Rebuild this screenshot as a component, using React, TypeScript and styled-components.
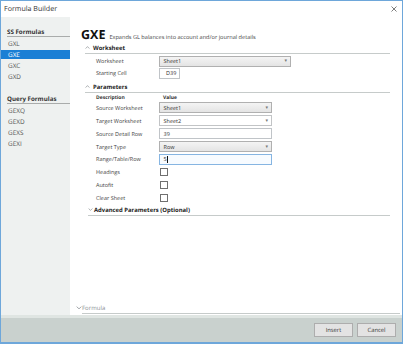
import styled, { createGlobalStyle } from "styled-components";

const GlobalStyle = createGlobalStyle`
  html, body {
    margin: 0;
    padding: 0;
    overflow: hidden;
  }
  body {
    font-family: "Open Sans", "Noto Sans", sans-serif;
    text-rendering: geometricPrecision;
    color: #333;
  }
  * {
    box-sizing: border-box;
  }
`;

const ssFormulas = ["GXL", "GXE", "GXC", "GXD"];
const queryFormulas = ["GEXQ", "GEXD", "GEXS", "GEXI"];

type Param = {
  label: string;
  kind: "select" | "input" | "check";
  value?: string;
  plain?: boolean;
  focused?: boolean;
};

const parameters: Param[] = [
  { label: "Source Worksheet", kind: "select", value: "Sheet1" },
  { label: "Target Worksheet", kind: "select", value: "Sheet2", plain: true },
  { label: "Source Detail Row", kind: "input", value: "39" },
  { label: "Target Type", kind: "select", value: "Row" },
  { label: "Range/Table/Row", kind: "input", value: "5", focused: true },
  { label: "Headings", kind: "check" },
  { label: "Autofit", kind: "check" },
  { label: "Clear Sheet", kind: "check" },
];

const Chevron = ({ up, size = 5 }: { up?: boolean; size?: number }) => (
  <svg width={size} height={size * 0.6} viewBox="0 0 5 3">
    <polyline
      points={up ? "0.6,2.6 2.5,0.6 4.4,2.6" : "0.6,0.5 2.5,2.4 4.4,0.5"}
      fill="none"
      stroke="#8b9094"
      strokeWidth="0.7"
    />
  </svg>
);

const App = () => {
  return (
    <>
      <GlobalStyle />
      <Window>
        <TitleBar>
          <Title>Formula Builder</Title>
          <svg width="6" height="6" viewBox="0 0 6 6">
            <path d="M0.5 0.5 L5.5 5.5 M5.5 0.5 L0.5 5.5" stroke="#444" strokeWidth="0.7" />
          </svg>
        </TitleBar>

        <Body>
          <Sidebar>
            <GroupTitle>SS Formulas</GroupTitle>
            {ssFormulas.map((f) => (
              <NavItem key={f} $active={f === "GXE"}>
                {f}
              </NavItem>
            ))}
            <GroupTitle $spaced>Query Formulas</GroupTitle>
            {queryFormulas.map((f) => (
              <NavItem key={f}>{f}</NavItem>
            ))}
          </Sidebar>

          <Main>
            <Content>
              <Heading>
                <Code>GXE</Code>
                <Desc>Expands GL balances into account and/or journal details</Desc>
              </Heading>

              <SectionHeader $indent={4}>
                <ChevronBox $w={8}>
                  <Chevron up />
                </ChevronBox>
                Worksheet
              </SectionHeader>
              <Row $h={12}>
                <Label>Worksheet</Label>
                <Select $w={132}>
                  Sheet1<Arrow>▾</Arrow>
                </Select>
              </Row>
              <Row $h={12}>
                <Label>Starting Cell</Label>
                <Input $w={21} $center>
                  D39
                </Input>
              </Row>

              <SectionHeader $indent={4} $gap={2}>
                <ChevronBox $w={8}>
                  <Chevron up />
                </ChevronBox>
                Parameters
              </SectionHeader>
              <SubHeader>
                <span>Description</span>
                <span>Value</span>
              </SubHeader>
              {parameters.map((p) => (
                <Row key={p.label} $h={12.86}>
                  <Label>{p.label}</Label>
                  {p.kind === "select" && (
                    <Select $w={113} $plain={p.plain}>
                      {p.value}
                      <Arrow>▾</Arrow>
                    </Select>
                  )}
                  {p.kind === "input" && (
                    <Input $w={113} $focused={p.focused}>
                      {p.value}
                      {p.focused && <Caret />}
                    </Input>
                  )}
                  {p.kind === "check" && <Check />}
                </Row>
              ))}

              <SectionHeader $indent={7}>
                <ChevronBox $w={6}>
                  <Chevron />
                </ChevronBox>
                Advanced Parameters (Optional)
              </SectionHeader>
            </Content>

            <FormulaBar>
              <ChevronBox $w={6}>
                <Chevron size={6} />
              </ChevronBox>
              <FormulaLabel>Formula</FormulaLabel>
            </FormulaBar>
          </Main>
        </Body>

        <Footer>
          <Button>Insert</Button>
          <Button>Cancel</Button>
        </Footer>
      </Window>
    </>
  );
};

const Window = styled.div`
  width: 403px;
  height: 344px;
  display: flex;
  flex-direction: column;
  background: #fff;
  border: 1px solid #6ea7da;
  border-bottom-width: 2px;
`;

const TitleBar = styled.div`
  height: 16px;
  flex: none;
  display: flex;
  align-items: center;
  justify-content: space-between;
  padding: 0 5px 0 3px;
`;

const Title = styled.span`
  font-size: 7.1px;
  color: #333;
`;

const Body = styled.div`
  flex: 1;
  min-height: 0;
  display: grid;
  grid-template-columns: 69px 1fr;
`;

const Sidebar = styled.nav`
  background: #eef1f0;
  padding-top: 10px;
  display: flex;
  flex-direction: column;
`;

const GroupTitle = styled.div<{ $spaced?: boolean }>`
  margin-left: 6px;
  margin-top: ${(p) => (p.$spaced ? "12.5px" : "0")};
  height: 10px;
  line-height: 9px;
  font-size: 6.2px;
  font-weight: 700;
  color: #333;
  border-bottom: 1px solid #a9acab;
`;

const NavItem = styled.div<{ $active?: boolean }>`
  height: 9px;
  margin-top: 2px;
  line-height: 9px;
  padding-left: 7px;
  font-size: 6.4px;
  color: ${(p) => (p.$active ? "#fff" : "#555")};
  background: ${(p) => (p.$active ? "#1a7fd5" : "transparent")};
`;

const Main = styled.main`
  display: flex;
  flex-direction: column;
  justify-content: space-between;
  min-width: 0;
`;

const Content = styled.div`
  padding: 11px 12px 0 11px;
  display: flex;
  flex-direction: column;
`;

const Heading = styled.div`
  height: 14px;
  display: flex;
  align-items: baseline;
  gap: 4px;
`;

const Code = styled.span`
  font-size: 12.5px;
  line-height: 14px;
  font-weight: 700;
  color: #111;
`;

const Desc = styled.span`
  font-size: 5.6px;
  color: #444;
`;

const SectionHeader = styled.div<{ $indent: number; $gap?: number }>`
  height: 12px;
  margin-left: ${(p) => p.$indent}px;
  margin-top: ${(p) => p.$gap ?? 0}px;
  margin-bottom: 1px;
  display: flex;
  align-items: center;
  font-size: 5.9px;
  font-weight: 700;
  color: #222;
  border-bottom: 1px solid #c6cbca;
`;

const ChevronBox = styled.span<{ $w: number }>`
  width: ${(p) => p.$w}px;
  display: flex;
  align-items: center;
`;

const SubHeader = styled.div`
  height: 7.5px;
  padding-left: 15px;
  display: grid;
  grid-template-columns: 67px auto;
  align-items: center;
  font-size: 5px;
  font-weight: 700;
  color: #333;
`;

const Row = styled.div<{ $h: number }>`
  height: ${(p) => p.$h}px;
  padding-left: 15px;
  display: grid;
  grid-template-columns: 63px auto;
  align-items: center;
`;

const Label = styled.span`
  font-size: 5.5px;
  color: #444;
`;

const Select = styled.div<{ $w: number; $plain?: boolean }>`
  width: ${(p) => p.$w}px;
  height: 11px;
  padding: 0 3px 0 3.5px;
  display: flex;
  align-items: center;
  justify-content: space-between;
  font-size: 5.5px;
  color: #333;
  border: 1px solid ${(p) => (p.$plain ? "#c2c4c6" : "#b0b0b0")};
  background: ${(p) => (p.$plain ? "#fff" : "linear-gradient(#f4f4f4, #e4e4e4)")};
`;

const Arrow = styled.span`
  font-size: 5px;
  color: #777;
`;

const Input = styled.div<{ $w: number; $center?: boolean; $focused?: boolean }>`
  width: ${(p) => p.$w}px;
  height: 11px;
  padding-left: 3.5px;
  display: flex;
  align-items: center;
  justify-content: ${(p) => (p.$center ? "center" : "flex-start")};
  font-size: 5.5px;
  color: #333;
  border: 1px solid ${(p) => (p.$focused ? "#86b5e2" : "#c0c4c8")};
  background: ${(p) => (p.$focused ? "#f7fbff" : "#fff")};
`;

const Caret = styled.span`
  width: 0.6px;
  height: 7px;
  margin-left: 0.5px;
  background: #111;
`;

const Check = styled.span`
  width: 8px;
  height: 8px;
  margin-left: 1px;
  border: 1px solid #707070;
  background: #fff;
`;

const FormulaBar = styled.div`
  height: 12px;
  margin: 0 2px 1px 6px;
  display: flex;
  align-items: stretch;
`;

const FormulaLabel = styled.span`
  flex: 1;
  display: flex;
  align-items: center;
  font-size: 6px;
  color: #8a9196;
  border-bottom: 1px solid #c6cbca;
`;

const Footer = styled.footer`
  height: 27px;
  flex: none;
  display: flex;
  align-items: center;
  justify-content: flex-end;
  gap: 4px;
  padding-right: 6px;
  background: #c9d1ce;
  border-top: 3px solid #dfe5e2;
`;

const Button = styled.button`
  width: 39px;
  height: 14px;
  padding: 0;
  font-family: inherit;
  font-size: 5.8px;
  text-rendering: geometricPrecision;
  color: #333;
  background: #e3e3e3;
  border: 1px solid #adadad;
  border-radius: 0;
`;

export default App;
